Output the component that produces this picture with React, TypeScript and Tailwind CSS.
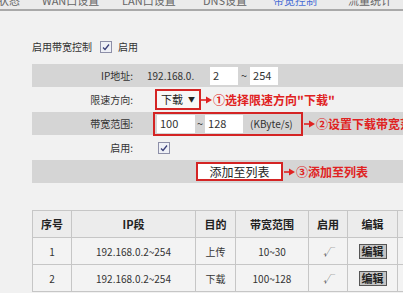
import React from 'react';

const font = { fontFamily: '"Noto Sans CJK SC", "Liberation Sans", sans-serif' };

const Arrow: React.FC = () => (
    <svg width="11" height="8" viewBox="0 0 11 8" className="shrink-0">
        <line x1="0" y1="4" x2="6" y2="4" stroke="#e02222" strokeWidth="1.6" />
        <polygon points="5,0.5 11,4 5,7.5" fill="#e02222" />
    </svg>
);

const Note: React.FC<{ text: string }> = ({ text }) => (
    <div className="flex items-center gap-[1px] text-[12px] font-bold text-[#e02222] whitespace-nowrap leading-none shrink-0">
        <Arrow />
        <span>{text}</span>
    </div>
);

const Check: React.FC = () => (
    <div className="w-[12px] h-[12px] border border-[#8d8fa8] bg-[#eef0f6] flex items-center justify-center shrink-0">
        <svg width="8" height="8" viewBox="0 0 8 8">
            <path d="M1 4.5 L3 6.5 L7 1.5" fill="none" stroke="#3a3f78" strokeWidth="1.3" />
        </svg>
    </div>
);

const Row: React.FC<{ label: string; shaded?: boolean; children?: React.ReactNode }> = ({ label, shaded, children }) => (
    <div className={`flex items-center h-[23px] my-[1px] ${shaded ? 'bg-[#d5d5d5]' : ''}`}>
        <div className="w-[103px] shrink-0 text-right text-[10px] text-[#333] pr-[2px] leading-none">{label}</div>
        <div className="flex items-center pl-[12px] h-full shrink-0">{children}</div>
    </div>
);

const Input: React.FC<{ value: string; w?: string }> = ({ value, w = 'w-[28px]' }) => (
    <div className={`${w} h-[18px] shrink-0 bg-white text-[11px] text-[#333] px-[3px] flex items-center leading-none`}>{value}</div>
);

const navItems = [
    { text: '状态', w: 'w-[44px]' },
    { text: 'WAN口设置', w: 'w-[80px]' },
    { text: 'LAN口设置', w: 'w-[81px]' },
    { text: 'DNS设置', w: 'w-[70px]' },
    { text: '带宽控制', w: 'w-[75px]', active: true },
    { text: '流量统计', w: 'w-[60px]' },
];

const rows = [
    { id: '1', ip: '192.168.0.2~254', dir: '上传', range: '10~30' },
    { id: '2', ip: '192.168.0.2~254', dir: '下载', range: '100~128' },
];

const th = 'border border-[#c6c6c6] h-[27px] text-[11px] font-bold text-[#222] text-center p-0';
const td = 'border border-[#c6c6c6] h-[27px] text-[10px] text-[#333] text-center p-0';

const App: React.FC = () => {
    return (
        <div className="w-[403px] h-[293px] overflow-hidden bg-[#f1f1f1]" style={font}>
            {/* Top nav, cropped by the screenshot */}
            <div className="h-[9px] overflow-hidden bg-[#ebebeb]">
                <div className="flex -mt-[7px] -ml-[2px] text-[11px] leading-[14px] text-[#666] whitespace-nowrap">
                    {navItems.map((n) => (
                        <span key={n.text} className={`${n.w} shrink-0 ${n.active ? 'text-[#4a6ed6]' : ''}`}>{n.text}</span>
                    ))}
                </div>
            </div>
            <div className="h-[2px] bg-[#a9a9a9]" />

            {/* Enable toggle */}
            <div className="flex items-center mt-[30px] ml-[32px] h-[12px] text-[10px] text-[#333] leading-none">
                <span>启用带宽控制</span>
                <div className="ml-[8px]"><Check /></div>
                <span className="ml-[6px]">启用</span>
            </div>

            {/* Form */}
            <div className="ml-[32px] mt-[11px]">
                <Row label="IP地址:" shaded>
                    <span className="text-[10px] text-[#333] leading-none w-[63px] shrink-0">192.168.0.</span>
                    <Input value="2" />
                    <span className="text-[11px] text-[#333] mx-[3px]">~</span>
                    <Input value="254" />
                </Row>
                <Row label="限速方向:">
                    <div className="flex items-center ml-[8px]">
                        <div className="w-[46px] h-[21px] shrink-0 border-2 border-[#d42424] bg-[#f7f7f7] flex items-center justify-between px-[4px] text-[11px] text-[#222] leading-none">
                            <span>下载</span>
                            <span className="text-[7px]">▼</span>
                        </div>
                        <Note text={'①选择限速方向"下载"'} />
                    </div>
                </Row>
                <Row label="带宽范围:" shaded>
                    <div className="flex items-center ml-[6px]">
                        <div className="h-[24px] w-[150px] shrink-0 border-2 border-[#d42424] flex items-center pl-[2px]">
                            <Input value="100" w="w-[38px]" />
                            <span className="text-[11px] text-[#333] mx-[2px]">~</span>
                            <Input value="128" w="w-[38px]" />
                            <span className="ml-[7px] text-[10px] text-[#333] leading-none whitespace-nowrap">(KByte/s)</span>
                        </div>
                        <div className="ml-[1px]"><Note text="②设置下载带宽范围" /></div>
                    </div>
                </Row>
                <Row label="启用:">
                    <div className="ml-[11px]"><Check /></div>
                </Row>
                <div className="flex items-center h-[23px] my-[1px] bg-[#d5d5d5] pl-[164px]">
                    <div className="w-[87px] h-[19px] shrink-0 border-2 border-[#d42424] bg-white flex items-center justify-center text-[12px] text-[#222] leading-none">添加至列表</div>
                    <div className="ml-[1px]"><Note text="③添加至列表" /></div>
                </div>
            </div>

            {/* Table */}
            <div className="ml-[32px] mt-[27px]">
                <table className="border-collapse table-fixed w-[400px] bg-[#f3f3f3]">
                    <colgroup>
                        <col className="w-[39px]" />
                        <col className="w-[124px]" />
                        <col className="w-[40px]" />
                        <col className="w-[73px]" />
                        <col className="w-[39px]" />
                        <col className="w-[50px]" />
                        <col />
                    </colgroup>
                    <thead>
                        <tr className="bg-[#ececec]">
                            <th className={th}>序号</th>
                            <th className={th}>IP段</th>
                            <th className={th}>目的</th>
                            <th className={th}>带宽范围</th>
                            <th className={th}>启用</th>
                            <th className={th}>编辑</th>
                            <th className={th}></th>
                        </tr>
                    </thead>
                    <tbody>
                        {rows.map((r) => (
                            <tr key={r.id}>
                                <td className={td}>{r.id}</td>
                                <td className={td}>{r.ip}</td>
                                <td className={td}>{r.dir}</td>
                                <td className={td}>{r.range}</td>
                                <td className={`${td} italic text-[#555]`}>√</td>
                                <td className={td}>
                                    <span className="inline-block border border-[#555] bg-[#c4c4c4] px-[2px] text-[11px] leading-[13px] font-bold text-[#222]">编辑</span>
                                </td>
                                <td className={td}></td>
                            </tr>
                        ))}
                    </tbody>
                </table>
            </div>
        </div>
    );
};

export default App;
